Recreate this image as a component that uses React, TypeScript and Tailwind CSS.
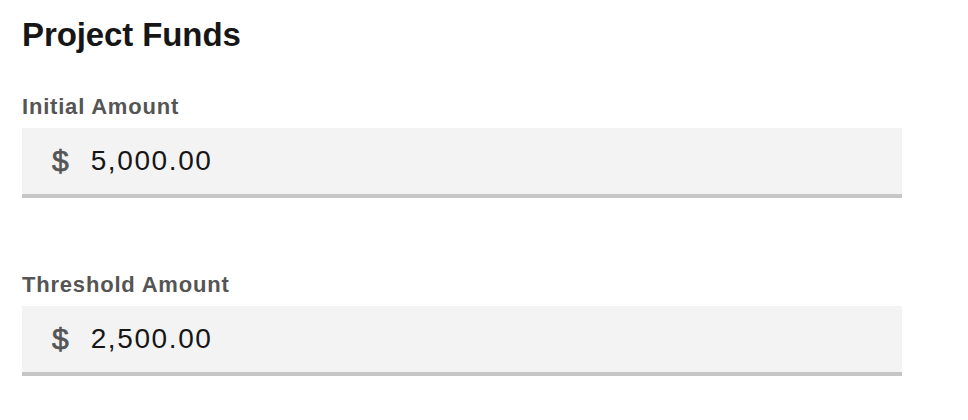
const font = { fontFamily: '"Liberation Sans", Arial, sans-serif' };

type MoneyFieldProps = {
  label: string;
  value: string;
};

function MoneyField({ label, value }: MoneyFieldProps) {
  return (
    <div className="flex flex-col">
      <label className="text-[22px] leading-[28px] font-bold text-[#555555] tracking-[0.8px]">
        {label}
      </label>
      <div className="mt-[7px] flex items-center h-[70px] w-[880px] bg-[#f3f3f3] border-b-4 border-[#c6c6c6] pl-[30px]">
        <span className="text-[30px] leading-none text-[#555555] [-webkit-text-stroke:0.7px_#555555]">
          $
        </span>
        <span className="ml-[22px] text-[28px] leading-none text-[#161616] tracking-[1.6px]">
          {value}
        </span>
      </div>
    </div>
  );
}

export default function App() {
  return (
    <div style={font} className="min-h-[420px] w-[968px] bg-white pl-[22px] pt-[15px]">
      <h1 className="text-[33px] leading-[40px] font-bold text-[#161616] tracking-[-0.1px]">
        Project Funds
      </h1>
      <div className="mt-[38px] flex flex-col gap-[73px]">
        <MoneyField label="Initial Amount" value="5,000.00" />
        <MoneyField label="Threshold Amount" value="2,500.00" />
      </div>
    </div>
  );
}
